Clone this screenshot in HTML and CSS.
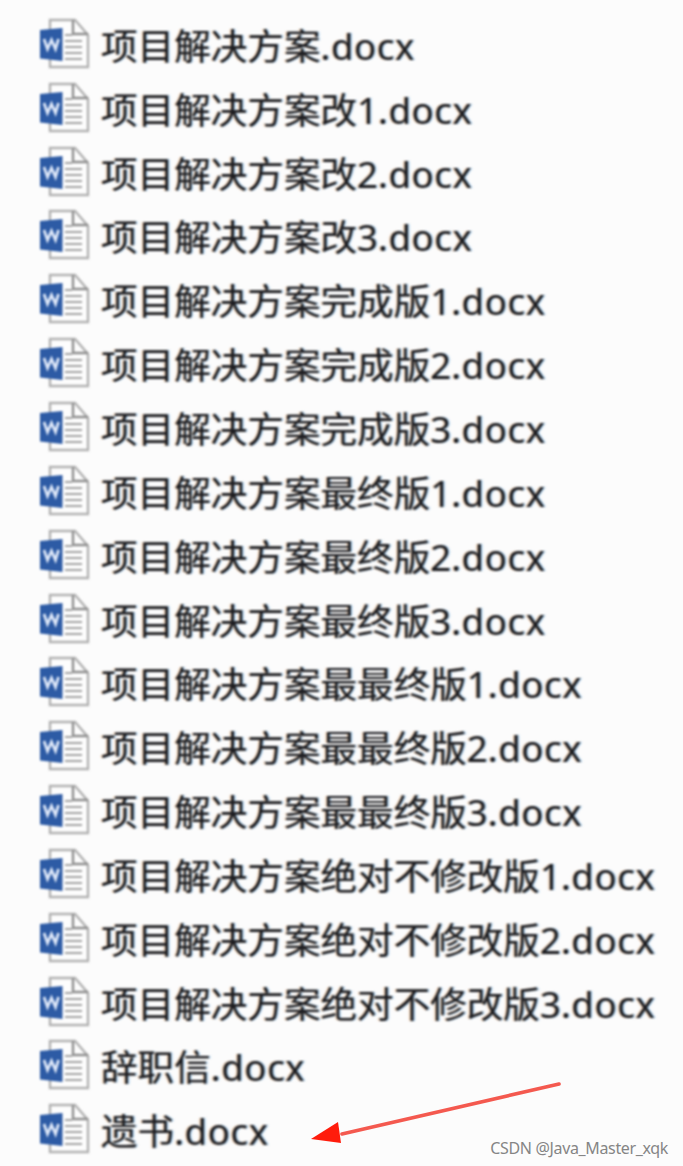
FILE: index.html
```
<!DOCTYPE html>
<html lang="zh-CN">
<head>
<meta charset="utf-8">
<title>项目解决方案</title>
<link rel="stylesheet" href="styles.css">
</head>
<body>
<svg class="defs" aria-hidden="true">
  <symbol id="word" viewBox="0 0 52 52">
    <path d="M11 2H36L49 17V49H11Z" fill="#fdfdfd" stroke="#b2b2b2" stroke-width="2.4"/>
    <path d="M34 2V16H49" fill="none" stroke="#8f8f8f" stroke-width="2.4"/>
    <path d="M26 17H33M26 23H43M26 29H43M26 35H43M26 41H43" stroke="#a2a2a2" stroke-width="2"/>
    <path d="M1 12L23.500 10V43L1 40.500Z" fill="#2d5ba5"/>
    <path d="M5 21L8.500 31L12.500 22L16.500 31L19.500 21" fill="none" stroke="#dde7f8" stroke-width="2.800"/>
  </symbol>
</svg>
<ul class="files">
  <li class="file"><svg class="icon"><use href="#word"/></svg><span class="name">项目解决方案<span class="ext">.docx</span></span></li>
  <li class="file"><svg class="icon"><use href="#word"/></svg><span class="name">项目解决方案改1<span class="ext">.docx</span></span></li>
  <li class="file"><svg class="icon"><use href="#word"/></svg><span class="name">项目解决方案改2<span class="ext">.docx</span></span></li>
  <li class="file"><svg class="icon"><use href="#word"/></svg><span class="name">项目解决方案改3<span class="ext">.docx</span></span></li>
  <li class="file"><svg class="icon"><use href="#word"/></svg><span class="name">项目解决方案完成版1<span class="ext">.docx</span></span></li>
  <li class="file"><svg class="icon"><use href="#word"/></svg><span class="name">项目解决方案完成版2<span class="ext">.docx</span></span></li>
  <li class="file"><svg class="icon"><use href="#word"/></svg><span class="name">项目解决方案完成版3<span class="ext">.docx</span></span></li>
  <li class="file"><svg class="icon"><use href="#word"/></svg><span class="name">项目解决方案最终版1<span class="ext">.docx</span></span></li>
  <li class="file"><svg class="icon"><use href="#word"/></svg><span class="name">项目解决方案最终版2<span class="ext">.docx</span></span></li>
  <li class="file"><svg class="icon"><use href="#word"/></svg><span class="name">项目解决方案最终版3<span class="ext">.docx</span></span></li>
  <li class="file"><svg class="icon"><use href="#word"/></svg><span class="name">项目解决方案最最终版1<span class="ext">.docx</span></span></li>
  <li class="file"><svg class="icon"><use href="#word"/></svg><span class="name">项目解决方案最最终版2<span class="ext">.docx</span></span></li>
  <li class="file"><svg class="icon"><use href="#word"/></svg><span class="name">项目解决方案最最终版3<span class="ext">.docx</span></span></li>
  <li class="file"><svg class="icon"><use href="#word"/></svg><span class="name">项目解决方案绝对不修改版1<span class="ext">.docx</span></span></li>
  <li class="file"><svg class="icon"><use href="#word"/></svg><span class="name">项目解决方案绝对不修改版2<span class="ext">.docx</span></span></li>
  <li class="file"><svg class="icon"><use href="#word"/></svg><span class="name">项目解决方案绝对不修改版3<span class="ext">.docx</span></span></li>
  <li class="file"><svg class="icon"><use href="#word"/></svg><span class="name">辞职信<span class="ext">.docx</span></span></li>
  <li class="file"><svg class="icon"><use href="#word"/></svg><span class="name">遗书<span class="ext">.docx</span></span></li>
</ul>
<svg class="arrow" viewBox="0 0 256 66">
  <path d="M32 55L249 5" stroke="#f4594f" stroke-width="3.600" stroke-linecap="round"/>
  <path d="M1 60L28 43L31 64Z" fill="#ff1c0c"/>
</svg>
<div class="watermark">CSDN @Java_Master_xqk</div>
</body>
</html>
```
FILE: styles.css
```
body {
  position: relative;
  margin: 0;
  height: 1166px;
  overflow: hidden;
  background: #fcfcfc;
}

.defs {
  position: absolute;
  width: 0;
  height: 0;
}

.files {
  margin: 0;
  padding: 14px 0 0 39px;
  list-style: none;
}

.file {
  display: flex;
  align-items: center;
  gap: 10px;
  height: 63.85px;
}

.icon {
  flex: none;
  width: 52px;
  height: 52px;
  margin-bottom: 4px;
  filter: blur(0.8px);
}

.name {
  font: 36.6px/60px "Noto Sans", "Noto Sans CJK SC", sans-serif;
  color: #1c1c20;
  white-space: nowrap;
  text-shadow: -1.5px 0 1px rgba(225, 150, 80, 0.45), 1.5px 0 1px rgba(70, 150, 215, 0.5);
  filter: blur(0.9px);
}

.ext {
  letter-spacing: 0.65px;
}

.arrow {
  position: absolute;
  left: 310px;
  top: 1079px;
  width: 256px;
  height: 66px;
  fill: none;
  filter: blur(0.6px);
}

.watermark {
  position: absolute;
  right: 15px;
  bottom: 6px;
  font: 16px/24px "Noto Sans", sans-serif;
  letter-spacing: -0.35px;
  color: #858585;
}
```
